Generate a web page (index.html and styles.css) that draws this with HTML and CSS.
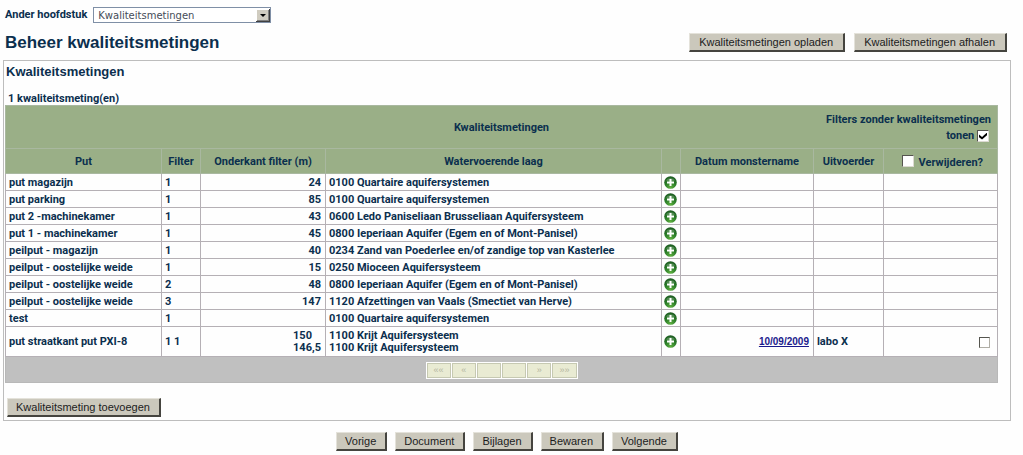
FILE: index.html
```html
<!DOCTYPE html>
<html lang="nl">
<head>
<meta charset="utf-8">
<title>Beheer kwaliteitsmetingen</title>
<link rel="stylesheet" href="styles.css">
</head>
<body>
<svg class="defs" aria-hidden="true">
  <defs>
    <radialGradient id="ball" cx="50%" cy="90%" r="90%">
      <stop offset="0" stop-color="#5fb040"/>
      <stop offset="0.5" stop-color="#2a7d28"/>
      <stop offset="1" stop-color="#1d5a22"/>
    </radialGradient>
    <symbol id="plus" viewBox="0 0 13 13">
      <circle cx="6.5" cy="6.5" r="6.3" fill="url(#ball)"/>
      <path d="M2 4.600a5 4 0 0 1 9 0Q6.500 6 2 4.600z" fill="#fff" opacity=".22"/>
      <path d="M6.500 3v7M3 6.500h7" stroke="#fff" stroke-width="2"/>
    </symbol>
  </defs>
</svg>
<form class="page">
  <div class="chapter">
    <label for="chapter">Ander hoofdstuk</label>
    <span class="picker">
      <select id="chapter"><option>Kwaliteitsmetingen</option></select>
      <svg class="arrow" viewBox="0 0 14 13" aria-hidden="true"><path d="M0 0h14v13H0z" fill="#404040"/><path d="M0 0h13v12H0z" fill="#fff"/><path d="M1 1h12v11H1z" fill="#808080"/><path d="M1 1h11v10H1z" fill="#d0ccc0"/><path d="M4 5h6L7 8z" fill="#000"/></svg>
    </span>
  </div>
  <header class="heading">
    <h1>Beheer kwaliteitsmetingen</h1>
    <div class="actions">
      <button type="button" class="button">Kwaliteitsmetingen opladen</button>
      <button type="button" class="button">Kwaliteitsmetingen afhalen</button>
    </div>
  </header>
  <section class="panel">
    <h2>Kwaliteitsmetingen</h2>
    <p class="count">1 kwaliteitsmeting(en)</p>
    <table class="grid">
      <colgroup><col class="c-put"><col class="c-filter"><col class="c-depth"><col><col class="c-add"><col class="c-date"><col class="c-lab"><col class="c-del"></colgroup>
      <thead>
        <tr>
          <th colspan="8" class="top">
            <div class="caption">
              <span class="title">Kwaliteitsmetingen</span>
              <label class="show">Filters zonder kwaliteitsmetingen tonen <input type="checkbox" class="tick" checked></label>
            </div>
          </th>
        </tr>
        <tr class="names">
          <th>Put</th><th>Filter</th><th>Onderkant filter (m)</th><th>Watervoerende laag</th><th></th><th>Datum monstername</th><th>Uitvoerder</th>
          <th><label class="all"><input type="checkbox" class="tick"> Verwijderen?</label></th>
        </tr>
      </thead>
      <tbody>
        <tr><td>put magazijn</td><td>1</td><td class="num">24</td><td>0100 Quartaire aquifersystemen</td><td class="add"><svg class="plus"><use href="#plus"/></svg></td><td></td><td></td><td></td></tr>
        <tr><td>put parking</td><td>1</td><td class="num">85</td><td>0100 Quartaire aquifersystemen</td><td class="add"><svg class="plus"><use href="#plus"/></svg></td><td></td><td></td><td></td></tr>
        <tr><td>put 2 -machinekamer</td><td>1</td><td class="num">43</td><td>0600 Ledo Paniseliaan Brusseliaan Aquifersysteem</td><td class="add"><svg class="plus"><use href="#plus"/></svg></td><td></td><td></td><td></td></tr>
        <tr><td>put 1 - machinekamer</td><td>1</td><td class="num">45</td><td>0800 Ieperiaan Aquifer (Egem en of Mont-Panisel)</td><td class="add"><svg class="plus"><use href="#plus"/></svg></td><td></td><td></td><td></td></tr>
        <tr><td>peilput - magazijn</td><td>1</td><td class="num">40</td><td>0234 Zand van Poederlee en/of zandige top van Kasterlee</td><td class="add"><svg class="plus"><use href="#plus"/></svg></td><td></td><td></td><td></td></tr>
        <tr><td>peilput - oostelijke weide</td><td>1</td><td class="num">15</td><td>0250 Mioceen Aquifersysteem</td><td class="add"><svg class="plus"><use href="#plus"/></svg></td><td></td><td></td><td></td></tr>
        <tr><td>peilput - oostelijke weide</td><td>2</td><td class="num">48</td><td>0800 Ieperiaan Aquifer (Egem en of Mont-Panisel)</td><td class="add"><svg class="plus"><use href="#plus"/></svg></td><td></td><td></td><td></td></tr>
        <tr><td>peilput - oostelijke weide</td><td>3</td><td class="num">147</td><td>1120 Afzettingen van Vaals (Smectiet van Herve)</td><td class="add"><svg class="plus"><use href="#plus"/></svg></td><td></td><td></td><td></td></tr>
        <tr><td>test</td><td>1</td><td></td><td>0100 Quartaire aquifersystemen</td><td class="add"><svg class="plus"><use href="#plus"/></svg></td><td></td><td></td><td></td></tr>
        <tr class="double"><td>put straatkant put PXI-8</td><td>1 1</td><td class="num"><span class="pair">150<br>146,5</span></td><td>1100 Krijt Aquifersysteem<br>1100 Krijt Aquifersysteem</td><td class="add"><svg class="plus"><use href="#plus"/></svg></td><td class="num"><a href="#">10/09/2009</a></td><td>labo X</td><td class="mark"><input type="checkbox" class="tick" aria-label="Verwijderen"></td></tr>
      </tbody>
      <tfoot>
        <tr><td colspan="8" class="foot">
          <div class="pager">
            <button type="button" disabled>««</button><button type="button" disabled>«</button><button type="button" disabled></button><button type="button" disabled></button><button type="button" disabled>»</button><button type="button" disabled>»»</button>
          </div>
        </td></tr>
      </tfoot>
    </table>
    <button type="button" class="button">Kwaliteitsmeting toevoegen</button>
  </section>
  <nav class="steps">
    <button type="button" class="button">Vorige</button>
    <button type="button" class="button">Document</button>
    <button type="button" class="button">Bijlagen</button>
    <button type="button" class="button">Bewaren</button>
    <button type="button" class="button">Volgende</button>
  </nav>
</form>
</body>
</html>
```

FILE: styles.css
```css
* { box-sizing: border-box; }
body {
  margin: 0;
  background: #fefefe;
  color: #0b2f4e;
  font: bold 11px/12px Roboto, "Liberation Sans", Arial, sans-serif;
}
.defs { position: absolute; width: 0; height: 0; }
.page { padding: 7px 12px 0 3px; }
h1, h2, p { margin: 0; }

.chapter { display: flex; align-items: center; gap: 6px; padding-left: 2px; }
.picker { display: grid; align-items: center; width: 178px; }
.picker select, .arrow { grid-area: 1 / 1; }
.picker select {
  appearance: none;
  width: 100%;
  height: 16px;
  padding: 1px 16px 0 4px;
  border: 1px solid #7f8fa6;
  border-radius: 0;
  background: #fff;
  color: #454c58;
  font: 10px/13px "DejaVu Sans", Verdana, sans-serif;
}
.arrow { justify-self: end; width: 14px; height: 13px; margin-right: 1px; pointer-events: none; }

.heading { display: flex; justify-content: space-between; align-items: center; padding: 8px 4px 5px 2px; }
h1, h2 { font-family: "Liberation Sans", Arial, sans-serif; }
h1 { font-size: 17px; line-height: 24px; }
.actions { display: flex; gap: 9px; padding-bottom: 1px; }
.button {
  height: 19px;
  padding: 1px 9px 0 8px;
  border: 1px solid;
  border-width: 1px 2px 2px 1px;
  border-color: #e4e2da #45443f #45443f #e4e2da;
  border-radius: 0;
  background: #cbc8bc;
  color: #1c1c1c;
  font: 11px/15px "Liberation Sans", Arial, sans-serif;
  white-space: nowrap;
}
.actions .button { padding: 1px 10px 0 9px; }

.panel { border: 1px solid #bdbdbd; padding: 2px 12px 3px 1px; }
h2 { padding-left: 1px; font-size: 13px; line-height: 17px; }
.count { padding: 13px 3px 0; }

.grid { width: 100%; table-layout: fixed; border-collapse: collapse; margin-bottom: 15px; }
.grid + .button { margin-left: 2px; }
.c-put { width: 156px; }
.c-filter { width: 39px; }
.c-depth { width: 125px; }
.c-add { width: 19px; }
.c-date { width: 133px; }
.c-lab { width: 70px; }
.c-del { width: 114px; }
.grid td { height: 17px; padding: 1px 3px 0; border: 1px solid #b5b0b5; }
.grid th { padding: 1px 3px 0; border: 1px solid #a9b8a0; background: #9aaf87; }
.grid .top { height: 43px; }
.names th { height: 25px; }
.caption { display: grid; grid-template-columns: 1fr auto 1fr; align-items: center; }
.title { grid-column: 2; }
.show { justify-self: end; width: 174px; padding-right: 3px; text-align: right; line-height: 16px; }
.all { padding-left: 4px; white-space: nowrap; }
.grid .num { padding-right: 4px; text-align: right; }
.pair { display: inline-block; text-align: left; }
.grid .add { padding: 0; text-align: center; }
.plus { display: block; width: 13px; height: 13px; margin: 0 auto; }
.grid .double td { height: 30px; }
.grid .mark { padding-right: 7px; text-align: right; }
a { color: #1a1a8c; font: bold 10px/12px "Liberation Sans", Arial, sans-serif; }

.tick {
  appearance: none;
  display: inline-grid;
  place-items: center;
  width: 12px;
  height: 12px;
  margin: 0 2px 0 0;
  border: 1px solid;
  border-color: #55554f #dcdad2 #dcdad2 #55554f;
  background: #fff;
  vertical-align: -1px;
}
.mark .tick { width: 11px; height: 11px; margin: 0; vertical-align: middle; border-color: #55554f #b0aea6 #b0aea6 #55554f; }
.tick:checked::before {
  content: "";
  width: 8px;
  height: 7px;
  background: #000;
  clip-path: polygon(0 30%, 38% 65%, 100% 0, 100% 38%, 38% 100%, 0 68%);
}

.grid .foot { height: 26px; background: #c0c0c0; border-color: #b8b8b8; }
.pager { display: flex; gap: 1px; width: 152px; margin: 0 auto; padding: 1px; background: #fff; }
.pager button {
  flex: 1;
  height: 15px;
  padding: 0;
  border: 1px solid #c6c9b2;
  border-radius: 0;
  background: #e9ebd3;
  color: #b4b69f;
  font: 9px/13px "Liberation Sans", Arial, sans-serif;
}

.steps { display: flex; justify-content: center; gap: 8px; padding-top: 11px; }
```
